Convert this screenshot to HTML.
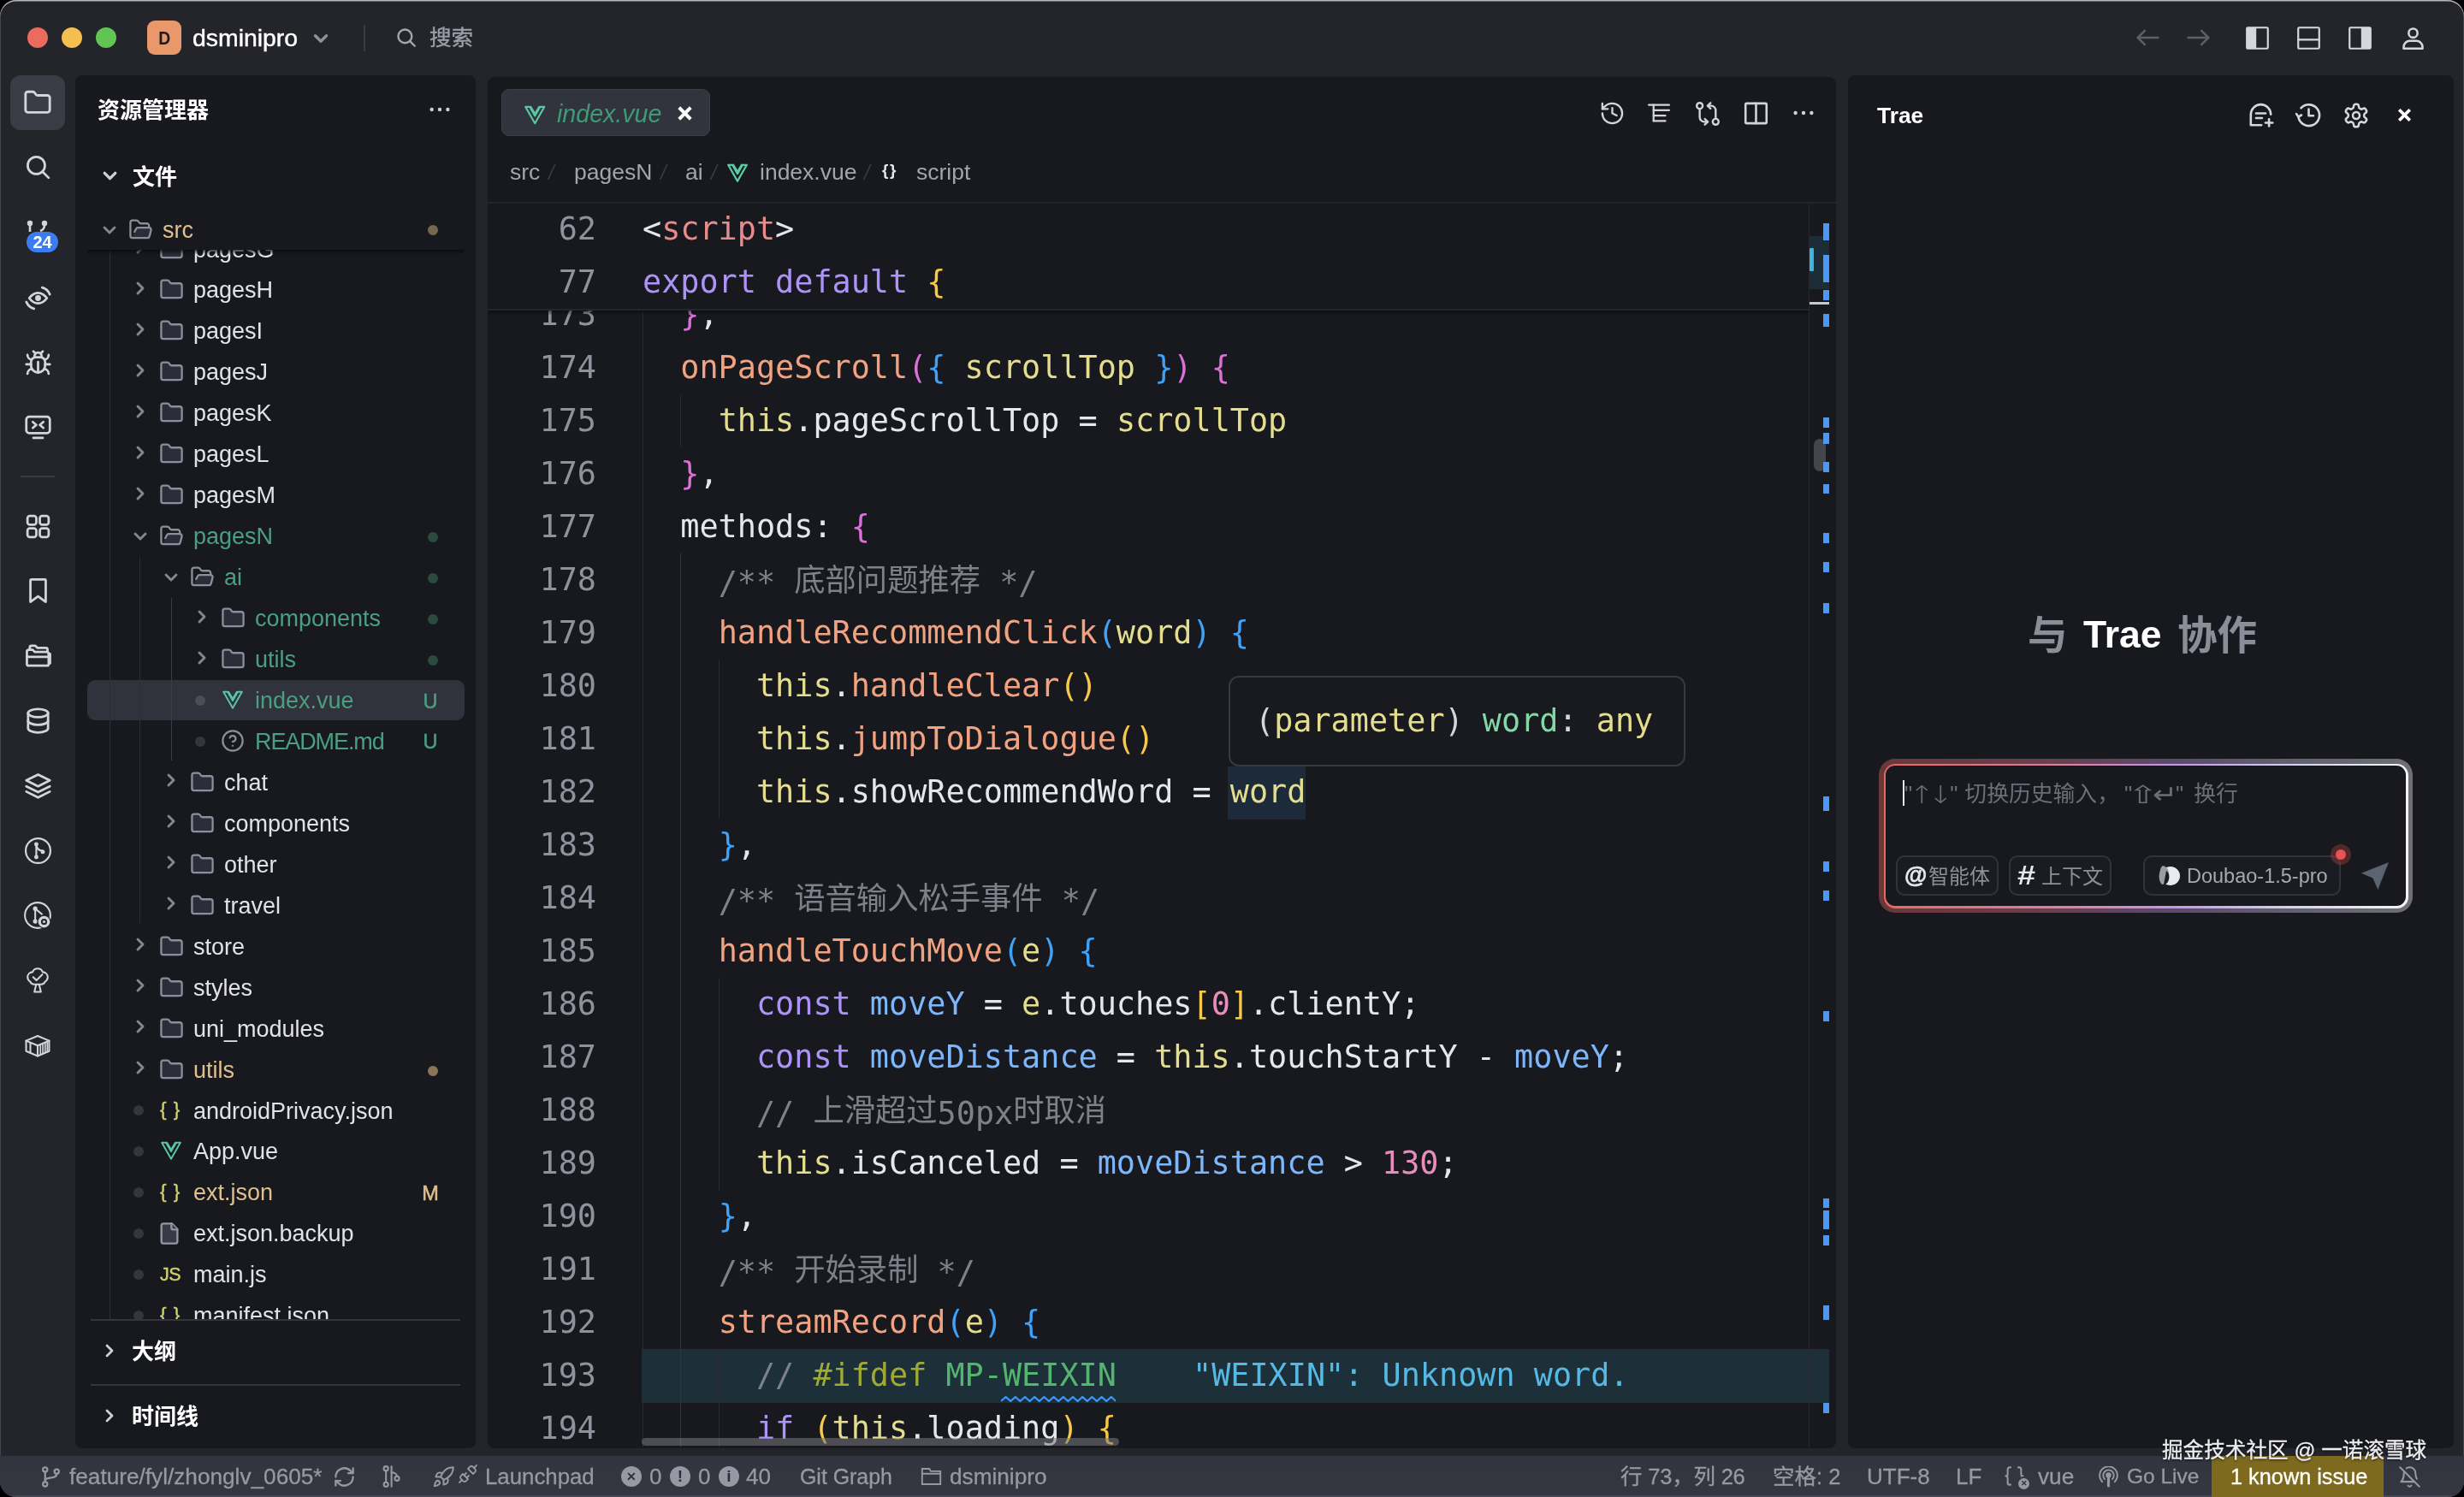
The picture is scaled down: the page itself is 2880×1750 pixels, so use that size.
<!DOCTYPE html>
<html lang="zh"><head><meta charset="utf-8"><title>index.vue — dsminipro</title>
<style>
html,body{margin:0;padding:0;background:#000;}
body{width:2880px;height:1750px;overflow:hidden;position:relative;font-family:"Liberation Sans","Noto Sans CJK SC",sans-serif;}
#win{position:absolute;left:0;top:0;width:2880px;height:1750px;background:#24252b;border-radius:19px;overflow:hidden;will-change:transform;box-shadow:inset 0 1.5px 0 0 #b4b6bd,inset 1px 0 0 0 #43454c,inset -1px 0 0 0 #43454c;}
.panel{position:absolute;background:#18191e;border-radius:8px;}

.ln{position:absolute;left:570px;width:127px;text-align:right;height:62px;line-height:62px;font-family:"DejaVu Sans Mono","Liberation Mono","Noto Sans CJK SC",monospace;font-size:36.81px;color:#8f919d;white-space:pre;}
.cl{position:absolute;left:751px;height:62px;line-height:62px;font-family:"DejaVu Sans Mono","Liberation Mono","Noto Sans CJK SC",monospace;font-size:36.81px;color:#e6e7ec;white-space:pre;}
.cj{font-size:36.3px;font-family:"Noto Sans CJK SC",sans-serif;position:relative;top:-2.5px;}

</style></head><body>
<div id="win">
<!-- panels -->
<div class="panel" style="left:88px;top:88px;width:468px;height:1605px"></div>
<div class="panel" style="left:570px;top:90px;width:1576px;height:1603px"></div>
<div class="panel" style="left:2160px;top:88px;width:708px;height:1605px"></div>
<div style="position:absolute;left:0;top:1702px;width:2880px;height:48px;background:linear-gradient(#32353e,#343740)"></div>
<div style="position:absolute;left:0;top:1748px;width:2880px;height:2px;background:#454852"></div>
<!-- titlebar -->
<div style="position:absolute;left:32px;top:32px;width:24px;height:24px;border-radius:50%;background:#ed6a5e"></div>
<div style="position:absolute;left:72px;top:32px;width:24px;height:24px;border-radius:50%;background:#f4bf4f"></div>
<div style="position:absolute;left:112px;top:32px;width:24px;height:24px;border-radius:50%;background:#61c554"></div>
<div style="position:absolute;left:172px;top:24px;width:40px;height:40px;border-radius:9px;background:#e9986c;color:#1c1c20;font-size:22.5px;font-weight:bold;line-height:41px;text-align:center"><span style="display:inline-block;transform:scaleX(.86)">D</span></div>
<div style="position:absolute;left:225px;top:24.5px;line-height:39px;height:39px;font-size:28.4px;color:#ffffff;font-weight:normal;white-space:nowrap;-webkit-text-stroke:0.45px #fff;">dsminipro</div>
<svg style="position:absolute;left:362.0px;top:31.5px;" width="26" height="26" viewBox="0 0 24 24" fill="none" stroke="#8f919b" stroke-width="3.1" stroke-linecap="round" stroke-linejoin="round"><path d="m6 9 6 6 6-6"/></svg>
<div style="position:absolute;left:425px;top:29px;width:2px;height:31px;background:#3b3d46"></div>
<svg style="position:absolute;left:462.0px;top:31.0px;" width="26" height="26" viewBox="0 0 24 24" fill="none" stroke="#a3a5af" stroke-width="2.2" stroke-linecap="round" stroke-linejoin="round"><circle cx="10.500" cy="10.500" r="7.300"/><path d="m21 21-5.200-5.200"/></svg>
<div style="position:absolute;left:502px;top:26.5px;line-height:35px;height:35px;font-size:25.5px;color:#9c9ea9;font-weight:normal;white-space:nowrap;-webkit-text-stroke:0.4px #9c9ea9;">搜索</div>
<svg style="position:absolute;left:2495.0px;top:29.0px;" width="30" height="30" viewBox="0 0 24 24" fill="none" stroke="#5d5f69" stroke-width="2" stroke-linecap="round" stroke-linejoin="round"><path d="m9.500 18.500-6.500-6.500 6.500-6.500"/><path d="M22 12H3"/></svg>
<svg style="position:absolute;left:2555.0px;top:29.0px;" width="30" height="30" viewBox="0 0 24 24" fill="none" stroke="#5d5f69" stroke-width="2" stroke-linecap="round" stroke-linejoin="round"><path d="M2 12h19"/><path d="m14.500 5.500 6.500 6.500-6.500 6.500"/></svg>
<svg style="position:absolute;left:2622.5px;top:28.5px;color:#d6d7dc;" width="31" height="31" viewBox="0 0 24 24" fill="none" stroke="#d6d7dc" stroke-width="1.7" stroke-linecap="round" stroke-linejoin="round"><rect x="2.500" y="2.500" width="19" height="19" rx="1"/><rect x="2.500" y="2.500" width="8.500" height="19" fill="currentColor" stroke="none"/></svg>
<svg style="position:absolute;left:2682.5px;top:28.5px;" width="31" height="31" viewBox="0 0 24 24" fill="none" stroke="#d6d7dc" stroke-width="1.7" stroke-linecap="round" stroke-linejoin="round"><rect x="2.500" y="2.500" width="19" height="19" rx="1"/><path d="M2.500 13.500h19"/></svg>
<svg style="position:absolute;left:2742.5px;top:28.5px;color:#d6d7dc;" width="31" height="31" viewBox="0 0 24 24" fill="none" stroke="#d6d7dc" stroke-width="1.7" stroke-linecap="round" stroke-linejoin="round"><rect x="2.500" y="2.500" width="19" height="19" rx="1"/><rect x="13" y="2.500" width="8.500" height="19" fill="currentColor" stroke="none"/></svg>
<svg style="position:absolute;left:2804.5px;top:28.5px;" width="31" height="31" viewBox="0 0 24 24" fill="none" stroke="#d6d7dc" stroke-width="2" stroke-linecap="round" stroke-linejoin="round"><circle cx="12" cy="7.500" r="4"/><path d="M3.500 21.500v-1.500a5.500 5.500 0 0 1 5.500-5.500h6a5.500 5.500 0 0 1 5.500 5.500v1.500Z"/></svg>
<!-- activity -->
<div style="position:absolute;left:12px;top:88px;width:64px;height:64px;border-radius:12px;background:#3a3c46"></div>
<svg style="position:absolute;left:27.0px;top:103.0px;color:#d4d5db;" width="34" height="34" viewBox="0 0 24 24" fill="none" stroke="#d4d5db" stroke-width="2" stroke-linecap="round" stroke-linejoin="round"><path d="M20 20a2 2 0 0 0 2-2V8a2 2 0 0 0-2-2h-7.9a2 2 0 0 1-1.69-.9L9.6 3.9A2 2 0 0 0 7.93 3H4a2 2 0 0 0-2 2v13a2 2 0 0 0 2 2Z"/></svg>
<svg style="position:absolute;left:27.5px;top:178.5px;color:#d4d5db;" width="33" height="33" viewBox="0 0 24 24" fill="none" stroke="#d4d5db" stroke-width="2" stroke-linecap="round" stroke-linejoin="round"><circle cx="10.500" cy="10.500" r="7.300"/><path d="m21 21-5.200-5.200"/></svg>
<svg style="position:absolute;left:27.5px;top:331.5px;color:#d4d5db;" width="33" height="33" viewBox="0 0 24 24" fill="none" stroke="#d4d5db" stroke-width="2" stroke-linecap="round" stroke-linejoin="round"><circle cx="12" cy="12" r="1.500" fill="currentColor"/><path d="M4.500 12c2.200-3 4.700-4.500 7.500-4.500s5.300 1.500 7.500 4.500c-2.200 3-4.700 4.500-7.500 4.500S6.700 15 4.500 12Z"/><path d="M15.500 3c3 .8 5.200 2.800 6.500 5.800"/><path d="M8.500 21c-3-.8-5.200-2.800-6.500-5.800"/></svg>
<svg style="position:absolute;left:27.5px;top:407.5px;color:#d4d5db;" width="33" height="33" viewBox="0 0 24 24" fill="none" stroke="#d4d5db" stroke-width="2" stroke-linecap="round" stroke-linejoin="round"><path d="m8 2 1.88 1.88"/><path d="M14.12 3.88 16 2"/><path d="M9 7.13v-1a3.003 3.003 0 1 1 6 0v1"/><path d="M12 20c-3.3 0-6-2.7-6-6v-3a4 4 0 0 1 4-4h4a4 4 0 0 1 4 4v3c0 3.3-2.7 6-6 6"/><path d="M12 20v-9"/><path d="M6.53 9C4.6 8.8 3 7.1 3 5"/><path d="M6 13H2"/><path d="M3 21c0-2.1 1.7-3.9 3.8-4"/><path d="M20.97 5c0 2.1-1.6 3.8-3.5 4"/><path d="M22 13h-4"/><path d="M17.2 17c2.1.1 3.8 1.9 3.8 4"/></svg>
<svg style="position:absolute;left:27.5px;top:482.5px;color:#d4d5db;" width="33" height="33" viewBox="0 0 24 24" fill="none" stroke="#d4d5db" stroke-width="2" stroke-linecap="round" stroke-linejoin="round"><rect x="2" y="3" width="20" height="14" rx="2.500"/><path d="M8 21h8"/><path d="m7.500 7.500 3 2.500-3 2.500"/><path d="m16.500 7.500-3 2.500 3 2.500"/></svg>
<svg style="position:absolute;left:27.5px;top:598.5px;color:#d4d5db;" width="33" height="33" viewBox="0 0 24 24" fill="none" stroke="#d4d5db" stroke-width="2" stroke-linecap="round" stroke-linejoin="round"><rect x="3" y="3" width="7.500" height="7.500" rx="2"/><rect x="13.500" y="3" width="7.500" height="7.500" rx="2"/><rect x="3" y="13.500" width="7.500" height="7.500" rx="2"/><rect x="13.500" y="13.500" width="7.500" height="7.500" rx="2"/></svg>
<svg style="position:absolute;left:27.5px;top:673.5px;color:#d4d5db;" width="33" height="33" viewBox="0 0 24 24" fill="none" stroke="#d4d5db" stroke-width="2" stroke-linecap="round" stroke-linejoin="round"><path d="M18.500 21.500 12 16.800 5.500 21.500V3.200a.7.7 0 0 1 .7-.7h11.600a.7.7 0 0 1 .7.7Z"/></svg>
<svg style="position:absolute;left:27.5px;top:749.5px;color:#d4d5db;" width="33" height="33" viewBox="0 0 24 24" fill="none" stroke="#d4d5db" stroke-width="2" stroke-linecap="round" stroke-linejoin="round"><path d="M5 6.500V4.800A1.300 1.300 0 0 1 6.300 3.500h3.400l1.600 1.800h7.400A1.300 1.300 0 0 1 20 6.600V8"/><path d="M2.500 19.500V8.300A1.300 1.300 0 0 1 3.800 7h3.700l1.600 1.800h10.600A1.300 1.300 0 0 1 21 10.100v9.100a1.300 1.300 0 0 1-1.300 1.300H3.800a1.300 1.300 0 0 1-1.300-1.300Z"/><path d="M2.500 13h18.500"/><path d="M21 10.500h1.200v8"/></svg>
<svg style="position:absolute;left:27.5px;top:825.5px;color:#d4d5db;" width="33" height="33" viewBox="0 0 24 24" fill="none" stroke="#d4d5db" stroke-width="2" stroke-linecap="round" stroke-linejoin="round"><ellipse cx="12" cy="5.500" rx="8.500" ry="3.500"/><path d="M3.500 5.500v13c0 1.900 3.800 3.500 8.500 3.500s8.500-1.600 8.500-3.500v-13"/><path d="M3.500 12c0 1.900 3.800 3.500 8.500 3.500s8.500-1.600 8.500-3.500"/></svg>
<svg style="position:absolute;left:27.5px;top:901.5px;color:#d4d5db;" width="33" height="33" viewBox="0 0 24 24" fill="none" stroke="#d4d5db" stroke-width="2" stroke-linecap="round" stroke-linejoin="round"><path d="m12 2.500 10 5-10 5-10-5Z"/><path d="m2 12.500 10 5 10-5"/><path d="m2 17 10 5 10-5"/></svg>
<svg style="position:absolute;left:27.5px;top:977.5px;color:#d4d5db;" width="33" height="33" viewBox="0 0 24 24" fill="none" stroke="#d4d5db" stroke-width="1.6" stroke-linecap="round" stroke-linejoin="round"><circle cx="12" cy="12" r="10.500"/><circle cx="10.500" cy="6.500" r="1" fill="currentColor"/><circle cx="10.500" cy="17.500" r="1" fill="currentColor"/><circle cx="16" cy="13" r="1" fill="currentColor"/><path d="M10.500 6.500v11"/><path d="M10.500 7.500c.5 2.500 2.500 4.500 5.500 4.500"/></svg>
<svg style="position:absolute;left:27.0px;top:1053.0px;color:#d4d5db;" width="34" height="34" viewBox="0 0 24 24" fill="none" stroke="#d4d5db" stroke-width="1.45" stroke-linecap="round" stroke-linejoin="round"><circle cx="12" cy="12" r="10.500"/><circle cx="10" cy="6.500" r="1.100" fill="currentColor"/><circle cx="10" cy="17" r="1.100" fill="currentColor"/><path d="M10 6.500v10.500"/><path d="M10 6.500 15.500 11"/><circle cx="17.300" cy="17.300" r="5.600" fill="#24252b" stroke="none"/><circle cx="17.300" cy="17.300" r="3.700" stroke-width="2.300"/><circle cx="17.300" cy="17.300" r="1.100" fill="currentColor" stroke="none"/></svg>
<svg style="position:absolute;left:27.0px;top:1129.0px;color:#d4d5db;" width="34" height="34" viewBox="0 0 24 24" fill="none" stroke="#d4d5db" stroke-width="1.45" stroke-linecap="round" stroke-linejoin="round"><path d="M12 2.300c2 0 3.600 1.200 4.200 2.900 2.300.100 4.100 1.900 4.100 4.200 0 1.600-.900 3-2.200 3.700-.500 1.300-1.800 2.200-3.300 2.200H9.200c-1.500 0-2.800-.900-3.300-2.200-1.300-.700-2.200-2.100-2.200-3.700 0-2.300 1.800-4.100 4.100-4.200.600-1.700 2.200-2.900 4.200-2.900Z"/><path d="M10.800 15.300 9.300 21.500h5.400l-1.500-6.200"/><path d="m8.300 9.300 2.700 2.700 4.800-4.800"/></svg>
<svg style="position:absolute;left:27.0px;top:1205.0px;color:#d4d5db;" width="34" height="34" viewBox="0 0 24 24" fill="none" stroke="#d4d5db" stroke-width="1.45" stroke-linecap="round" stroke-linejoin="round"><path d="M2.500 8.200 12 4.200l9.500 4v8.600L12 20.800l-9.500-4Z"/><path d="M2.500 8.200 12 12.200l9.500-4"/><path d="M12 12.200v8.600"/><path d="M6 10v8.300" /><path d="M14.300 11.600v8" stroke-width="1.200"/><path d="M16.300 10.800v8" stroke-width="1.200"/><path d="M18.200 10v8" stroke-width="1.200"/><path d="M20 9.300v8" stroke-width="1.200"/></svg>
<svg style="position:absolute;left:28px;top:255px;" width="44" height="44" viewBox="0 0 44 44" fill="none"><circle cx="7" cy="6" r="3.200" fill="#d4d5db"/><circle cx="24" cy="6" r="3.200" fill="#d4d5db"/><path d="M7 8v8" stroke="#d4d5db" stroke-width="2.600"/><path d="M24 8c0 4-2 6-5 7" stroke="#d4d5db" stroke-width="2.600"/></svg>
<div style="position:absolute;left:31px;top:271px;width:37px;height:24px;border-radius:12px;background:#3b7df0;color:#fff;font-size:20px;font-weight:bold;line-height:24px;text-align:center;letter-spacing:0px">24</div>
<div style="position:absolute;left:24px;top:556px;width:40px;height:2px;background:#3a3c45"></div>
<!-- sidebar -->
<div style="position:absolute;left:114px;top:111.0px;line-height:36px;height:36px;font-size:26px;color:#ffffff;font-weight:bold;white-space:nowrap;">资源管理器</div>
<svg style="position:absolute;left:499.0px;top:113.0px;color:#d0d1d7;" width="30" height="30" viewBox="0 0 24 24" fill="none" stroke="#d0d1d7" stroke-width="2" stroke-linecap="round" stroke-linejoin="round"><circle cx="4.500" cy="12" r="1.750" fill="currentColor" stroke="none"/><circle cx="12" cy="12" r="1.750" fill="currentColor" stroke="none"/><circle cx="19.500" cy="12" r="1.750" fill="currentColor" stroke="none"/></svg>
<div style="position:absolute;left:88px;top:292px;width:468px;height:1250px;overflow:hidden"><div style="position:absolute;left:-88px;top:-292px">
<div style="position:absolute;left:102px;top:795px;width:441px;height:47px;border-radius:9px;background:#30323c"></div>
<div style="position:absolute;left:128px;top:292px;width:1px;height:1250px;background:#2c2e36"></div>
<div style="position:absolute;left:163px;top:651px;width:1px;height:428px;background:#2c2e36"></div>
<div style="position:absolute;left:200px;top:699px;width:1px;height:190px;background:#3a3c45"></div>
<svg style="position:absolute;left:152.0px;top:277.0px;" width="24" height="24" viewBox="0 0 24 24" fill="none" stroke="#85878f" stroke-width="2.9" stroke-linecap="round" stroke-linejoin="round"><path d="m9 6 6 6-6 6"/></svg>
<svg style="position:absolute;left:185.5px;top:276.5px;fill:#2b2e38;" width="29" height="29" viewBox="0 0 24 24" fill="none" stroke="#8c8e9b" stroke-width="1.9" stroke-linecap="round" stroke-linejoin="round"><path d="M20 20a2 2 0 0 0 2-2V8a2 2 0 0 0-2-2h-7.9a2 2 0 0 1-1.69-.9L9.6 3.9A2 2 0 0 0 7.93 3H4a2 2 0 0 0-2 2v13a2 2 0 0 0 2 2Z"/></svg>
<div style="position:absolute;left:226px;top:273.5px;line-height:37px;height:37px;font-size:27px;color:#e2e3e8;font-weight:normal;white-space:nowrap;">pagesG</div>
<svg style="position:absolute;left:152.0px;top:324.9px;" width="24" height="24" viewBox="0 0 24 24" fill="none" stroke="#85878f" stroke-width="2.9" stroke-linecap="round" stroke-linejoin="round"><path d="m9 6 6 6-6 6"/></svg>
<svg style="position:absolute;left:185.5px;top:324.4px;fill:#2b2e38;" width="29" height="29" viewBox="0 0 24 24" fill="none" stroke="#8c8e9b" stroke-width="1.9" stroke-linecap="round" stroke-linejoin="round"><path d="M20 20a2 2 0 0 0 2-2V8a2 2 0 0 0-2-2h-7.9a2 2 0 0 1-1.69-.9L9.6 3.9A2 2 0 0 0 7.93 3H4a2 2 0 0 0-2 2v13a2 2 0 0 0 2 2Z"/></svg>
<div style="position:absolute;left:226px;top:321.4px;line-height:37px;height:37px;font-size:27px;color:#e2e3e8;font-weight:normal;white-space:nowrap;">pagesH</div>
<svg style="position:absolute;left:152.0px;top:372.9px;" width="24" height="24" viewBox="0 0 24 24" fill="none" stroke="#85878f" stroke-width="2.9" stroke-linecap="round" stroke-linejoin="round"><path d="m9 6 6 6-6 6"/></svg>
<svg style="position:absolute;left:185.5px;top:372.4px;fill:#2b2e38;" width="29" height="29" viewBox="0 0 24 24" fill="none" stroke="#8c8e9b" stroke-width="1.9" stroke-linecap="round" stroke-linejoin="round"><path d="M20 20a2 2 0 0 0 2-2V8a2 2 0 0 0-2-2h-7.9a2 2 0 0 1-1.69-.9L9.6 3.9A2 2 0 0 0 7.93 3H4a2 2 0 0 0-2 2v13a2 2 0 0 0 2 2Z"/></svg>
<div style="position:absolute;left:226px;top:369.4px;line-height:37px;height:37px;font-size:27px;color:#e2e3e8;font-weight:normal;white-space:nowrap;">pagesI</div>
<svg style="position:absolute;left:152.0px;top:420.8px;" width="24" height="24" viewBox="0 0 24 24" fill="none" stroke="#85878f" stroke-width="2.9" stroke-linecap="round" stroke-linejoin="round"><path d="m9 6 6 6-6 6"/></svg>
<svg style="position:absolute;left:185.5px;top:420.3px;fill:#2b2e38;" width="29" height="29" viewBox="0 0 24 24" fill="none" stroke="#8c8e9b" stroke-width="1.9" stroke-linecap="round" stroke-linejoin="round"><path d="M20 20a2 2 0 0 0 2-2V8a2 2 0 0 0-2-2h-7.9a2 2 0 0 1-1.69-.9L9.6 3.9A2 2 0 0 0 7.93 3H4a2 2 0 0 0-2 2v13a2 2 0 0 0 2 2Z"/></svg>
<div style="position:absolute;left:226px;top:417.3px;line-height:37px;height:37px;font-size:27px;color:#e2e3e8;font-weight:normal;white-space:nowrap;">pagesJ</div>
<svg style="position:absolute;left:152.0px;top:468.8px;" width="24" height="24" viewBox="0 0 24 24" fill="none" stroke="#85878f" stroke-width="2.9" stroke-linecap="round" stroke-linejoin="round"><path d="m9 6 6 6-6 6"/></svg>
<svg style="position:absolute;left:185.5px;top:468.3px;fill:#2b2e38;" width="29" height="29" viewBox="0 0 24 24" fill="none" stroke="#8c8e9b" stroke-width="1.9" stroke-linecap="round" stroke-linejoin="round"><path d="M20 20a2 2 0 0 0 2-2V8a2 2 0 0 0-2-2h-7.9a2 2 0 0 1-1.69-.9L9.6 3.9A2 2 0 0 0 7.93 3H4a2 2 0 0 0-2 2v13a2 2 0 0 0 2 2Z"/></svg>
<div style="position:absolute;left:226px;top:465.3px;line-height:37px;height:37px;font-size:27px;color:#e2e3e8;font-weight:normal;white-space:nowrap;">pagesK</div>
<svg style="position:absolute;left:152.0px;top:516.8px;" width="24" height="24" viewBox="0 0 24 24" fill="none" stroke="#85878f" stroke-width="2.9" stroke-linecap="round" stroke-linejoin="round"><path d="m9 6 6 6-6 6"/></svg>
<svg style="position:absolute;left:185.5px;top:516.2px;fill:#2b2e38;" width="29" height="29" viewBox="0 0 24 24" fill="none" stroke="#8c8e9b" stroke-width="1.9" stroke-linecap="round" stroke-linejoin="round"><path d="M20 20a2 2 0 0 0 2-2V8a2 2 0 0 0-2-2h-7.9a2 2 0 0 1-1.69-.9L9.6 3.9A2 2 0 0 0 7.93 3H4a2 2 0 0 0-2 2v13a2 2 0 0 0 2 2Z"/></svg>
<div style="position:absolute;left:226px;top:513.2px;line-height:37px;height:37px;font-size:27px;color:#e2e3e8;font-weight:normal;white-space:nowrap;">pagesL</div>
<svg style="position:absolute;left:152.0px;top:564.7px;" width="24" height="24" viewBox="0 0 24 24" fill="none" stroke="#85878f" stroke-width="2.9" stroke-linecap="round" stroke-linejoin="round"><path d="m9 6 6 6-6 6"/></svg>
<svg style="position:absolute;left:185.5px;top:564.2px;fill:#2b2e38;" width="29" height="29" viewBox="0 0 24 24" fill="none" stroke="#8c8e9b" stroke-width="1.9" stroke-linecap="round" stroke-linejoin="round"><path d="M20 20a2 2 0 0 0 2-2V8a2 2 0 0 0-2-2h-7.9a2 2 0 0 1-1.69-.9L9.6 3.9A2 2 0 0 0 7.93 3H4a2 2 0 0 0-2 2v13a2 2 0 0 0 2 2Z"/></svg>
<div style="position:absolute;left:226px;top:561.2px;line-height:37px;height:37px;font-size:27px;color:#e2e3e8;font-weight:normal;white-space:nowrap;">pagesM</div>
<svg style="position:absolute;left:152.0px;top:615.2px;" width="24" height="24" viewBox="0 0 24 24" fill="none" stroke="#85878f" stroke-width="2.9" stroke-linecap="round" stroke-linejoin="round"><path d="m6 9 6 6 6-6"/></svg>
<svg style="position:absolute;left:185.5px;top:612.2px;" width="29" height="29" viewBox="0 0 24 24" fill="none" stroke="#8c8e9b" stroke-width="1.9" stroke-linecap="round" stroke-linejoin="round"><path d="M3.200 19.600 6 14l1.500-2.900A2 2 0 0 1 9.240 10H20a2 2 0 0 1 1.940 2.500l-1.540 6a2 2 0 0 1-1.950 1.500H4Z" fill="#2b2e38" stroke="none"/><path d="m6 14 1.5-2.9A2 2 0 0 1 9.24 10H20a2 2 0 0 1 1.94 2.5l-1.54 6a2 2 0 0 1-1.95 1.5H4a2 2 0 0 1-2-2V5a2 2 0 0 1 2-2h3.9a2 2 0 0 1 1.69.9l.81 1.2a2 2 0 0 0 1.67.9H18a2 2 0 0 1 2 2v2"/></svg>
<div style="position:absolute;left:226px;top:609.2px;line-height:37px;height:37px;font-size:27px;color:#4a9f80;font-weight:normal;white-space:nowrap;">pagesN</div>
<div style="position:absolute;left:500px;top:622.1500000000001px;width:12px;height:12px;border-radius:50%;background:#2c4a40"></div>
<svg style="position:absolute;left:188.0px;top:663.1px;" width="24" height="24" viewBox="0 0 24 24" fill="none" stroke="#85878f" stroke-width="2.9" stroke-linecap="round" stroke-linejoin="round"><path d="m6 9 6 6 6-6"/></svg>
<svg style="position:absolute;left:221.5px;top:660.1px;" width="29" height="29" viewBox="0 0 24 24" fill="none" stroke="#8c8e9b" stroke-width="1.9" stroke-linecap="round" stroke-linejoin="round"><path d="M3.200 19.600 6 14l1.500-2.900A2 2 0 0 1 9.240 10H20a2 2 0 0 1 1.940 2.500l-1.540 6a2 2 0 0 1-1.950 1.500H4Z" fill="#2b2e38" stroke="none"/><path d="m6 14 1.5-2.9A2 2 0 0 1 9.24 10H20a2 2 0 0 1 1.94 2.5l-1.54 6a2 2 0 0 1-1.95 1.5H4a2 2 0 0 1-2-2V5a2 2 0 0 1 2-2h3.9a2 2 0 0 1 1.69.9l.81 1.2a2 2 0 0 0 1.67.9H18a2 2 0 0 1 2 2v2"/></svg>
<div style="position:absolute;left:262px;top:657.1px;line-height:37px;height:37px;font-size:27px;color:#4a9f80;font-weight:normal;white-space:nowrap;">ai</div>
<div style="position:absolute;left:500px;top:670.1000000000001px;width:12px;height:12px;border-radius:50%;background:#2c4a40"></div>
<svg style="position:absolute;left:224.0px;top:708.6px;" width="24" height="24" viewBox="0 0 24 24" fill="none" stroke="#85878f" stroke-width="2.9" stroke-linecap="round" stroke-linejoin="round"><path d="m9 6 6 6-6 6"/></svg>
<svg style="position:absolute;left:257.5px;top:708.1px;fill:#2b2e38;" width="29" height="29" viewBox="0 0 24 24" fill="none" stroke="#8c8e9b" stroke-width="1.9" stroke-linecap="round" stroke-linejoin="round"><path d="M20 20a2 2 0 0 0 2-2V8a2 2 0 0 0-2-2h-7.9a2 2 0 0 1-1.69-.9L9.6 3.9A2 2 0 0 0 7.93 3H4a2 2 0 0 0-2 2v13a2 2 0 0 0 2 2Z"/></svg>
<div style="position:absolute;left:298px;top:705.1px;line-height:37px;height:37px;font-size:27px;color:#4a9f80;font-weight:normal;white-space:nowrap;">components</div>
<div style="position:absolute;left:500px;top:718.0500000000002px;width:12px;height:12px;border-radius:50%;background:#2c4a40"></div>
<svg style="position:absolute;left:224.0px;top:756.5px;" width="24" height="24" viewBox="0 0 24 24" fill="none" stroke="#85878f" stroke-width="2.9" stroke-linecap="round" stroke-linejoin="round"><path d="m9 6 6 6-6 6"/></svg>
<svg style="position:absolute;left:257.5px;top:756.0px;fill:#2b2e38;" width="29" height="29" viewBox="0 0 24 24" fill="none" stroke="#8c8e9b" stroke-width="1.9" stroke-linecap="round" stroke-linejoin="round"><path d="M20 20a2 2 0 0 0 2-2V8a2 2 0 0 0-2-2h-7.9a2 2 0 0 1-1.69-.9L9.6 3.9A2 2 0 0 0 7.93 3H4a2 2 0 0 0-2 2v13a2 2 0 0 0 2 2Z"/></svg>
<div style="position:absolute;left:298px;top:753.0px;line-height:37px;height:37px;font-size:27px;color:#4a9f80;font-weight:normal;white-space:nowrap;">utils</div>
<div style="position:absolute;left:500px;top:766.0000000000002px;width:12px;height:12px;border-radius:50%;background:#2c4a40"></div>
<div style="position:absolute;left:228px;top:812.9500000000003px;width:12px;height:12px;border-radius:50%;background:#4b4d58"></div>
<svg style="position:absolute;left:258.5px;top:805.0px;" width="26" height="26" viewBox="0 0 24 24" fill="none" stroke="#5cc5a2" stroke-width="1.8" stroke-linecap="round" stroke-linejoin="round"><path d="M2 3.500h4.500L12 13l5.500-9.500H22L12 21Z" /><path d="M7.500 3.500 12 11l4.500-7.500"/></svg>
<div style="position:absolute;left:298px;top:801.0px;line-height:37px;height:37px;font-size:27px;color:#4a9f80;font-weight:normal;white-space:nowrap;">index.vue</div>
<div style="position:absolute;left:493px;top:803.5px;line-height:32px;height:32px;font-size:23.5px;color:#4a9f80;font-weight:normal;white-space:nowrap;width:20px;text-align:center;-webkit-text-stroke:0.5px #4a9f80;">U</div>
<div style="position:absolute;left:228px;top:860.9000000000003px;width:12px;height:12px;border-radius:50%;background:#34363f"></div>
<svg style="position:absolute;left:258.0px;top:852.4px;" width="28" height="28" viewBox="0 0 24 24" fill="none" stroke="#8c8e9b" stroke-width="1.9" stroke-linecap="round" stroke-linejoin="round"><circle cx="12" cy="12" r="10"/><path d="M9.090 9a3 3 0 0 1 5.830 1c0 2-3 3-3 3"/><path d="M12 17h.010"/></svg>
<div style="position:absolute;left:298px;top:848.9px;line-height:37px;height:37px;font-size:27px;color:#4a9f80;font-weight:normal;white-space:nowrap;letter-spacing:-1.1px;">README.md</div>
<div style="position:absolute;left:493px;top:851.4px;line-height:32px;height:32px;font-size:23.5px;color:#4a9f80;font-weight:normal;white-space:nowrap;width:20px;text-align:center;-webkit-text-stroke:0.5px #4a9f80;">U</div>
<svg style="position:absolute;left:188.0px;top:900.4px;" width="24" height="24" viewBox="0 0 24 24" fill="none" stroke="#85878f" stroke-width="2.9" stroke-linecap="round" stroke-linejoin="round"><path d="m9 6 6 6-6 6"/></svg>
<svg style="position:absolute;left:221.5px;top:899.9px;fill:#2b2e38;" width="29" height="29" viewBox="0 0 24 24" fill="none" stroke="#8c8e9b" stroke-width="1.9" stroke-linecap="round" stroke-linejoin="round"><path d="M20 20a2 2 0 0 0 2-2V8a2 2 0 0 0-2-2h-7.9a2 2 0 0 1-1.69-.9L9.6 3.9A2 2 0 0 0 7.93 3H4a2 2 0 0 0-2 2v13a2 2 0 0 0 2 2Z"/></svg>
<div style="position:absolute;left:262px;top:896.9px;line-height:37px;height:37px;font-size:27px;color:#e2e3e8;font-weight:normal;white-space:nowrap;">chat</div>
<svg style="position:absolute;left:188.0px;top:948.3px;" width="24" height="24" viewBox="0 0 24 24" fill="none" stroke="#85878f" stroke-width="2.9" stroke-linecap="round" stroke-linejoin="round"><path d="m9 6 6 6-6 6"/></svg>
<svg style="position:absolute;left:221.5px;top:947.8px;fill:#2b2e38;" width="29" height="29" viewBox="0 0 24 24" fill="none" stroke="#8c8e9b" stroke-width="1.9" stroke-linecap="round" stroke-linejoin="round"><path d="M20 20a2 2 0 0 0 2-2V8a2 2 0 0 0-2-2h-7.9a2 2 0 0 1-1.69-.9L9.6 3.9A2 2 0 0 0 7.93 3H4a2 2 0 0 0-2 2v13a2 2 0 0 0 2 2Z"/></svg>
<div style="position:absolute;left:262px;top:944.8px;line-height:37px;height:37px;font-size:27px;color:#e2e3e8;font-weight:normal;white-space:nowrap;">components</div>
<svg style="position:absolute;left:188.0px;top:996.3px;" width="24" height="24" viewBox="0 0 24 24" fill="none" stroke="#85878f" stroke-width="2.9" stroke-linecap="round" stroke-linejoin="round"><path d="m9 6 6 6-6 6"/></svg>
<svg style="position:absolute;left:221.5px;top:995.8px;fill:#2b2e38;" width="29" height="29" viewBox="0 0 24 24" fill="none" stroke="#8c8e9b" stroke-width="1.9" stroke-linecap="round" stroke-linejoin="round"><path d="M20 20a2 2 0 0 0 2-2V8a2 2 0 0 0-2-2h-7.9a2 2 0 0 1-1.69-.9L9.6 3.9A2 2 0 0 0 7.93 3H4a2 2 0 0 0-2 2v13a2 2 0 0 0 2 2Z"/></svg>
<div style="position:absolute;left:262px;top:992.8px;line-height:37px;height:37px;font-size:27px;color:#e2e3e8;font-weight:normal;white-space:nowrap;">other</div>
<svg style="position:absolute;left:188.0px;top:1044.2px;" width="24" height="24" viewBox="0 0 24 24" fill="none" stroke="#85878f" stroke-width="2.9" stroke-linecap="round" stroke-linejoin="round"><path d="m9 6 6 6-6 6"/></svg>
<svg style="position:absolute;left:221.5px;top:1043.7px;fill:#2b2e38;" width="29" height="29" viewBox="0 0 24 24" fill="none" stroke="#8c8e9b" stroke-width="1.9" stroke-linecap="round" stroke-linejoin="round"><path d="M20 20a2 2 0 0 0 2-2V8a2 2 0 0 0-2-2h-7.9a2 2 0 0 1-1.69-.9L9.6 3.9A2 2 0 0 0 7.93 3H4a2 2 0 0 0-2 2v13a2 2 0 0 0 2 2Z"/></svg>
<div style="position:absolute;left:262px;top:1040.7px;line-height:37px;height:37px;font-size:27px;color:#e2e3e8;font-weight:normal;white-space:nowrap;">travel</div>
<svg style="position:absolute;left:152.0px;top:1092.2px;" width="24" height="24" viewBox="0 0 24 24" fill="none" stroke="#85878f" stroke-width="2.9" stroke-linecap="round" stroke-linejoin="round"><path d="m9 6 6 6-6 6"/></svg>
<svg style="position:absolute;left:185.5px;top:1091.7px;fill:#2b2e38;" width="29" height="29" viewBox="0 0 24 24" fill="none" stroke="#8c8e9b" stroke-width="1.9" stroke-linecap="round" stroke-linejoin="round"><path d="M20 20a2 2 0 0 0 2-2V8a2 2 0 0 0-2-2h-7.9a2 2 0 0 1-1.69-.9L9.6 3.9A2 2 0 0 0 7.93 3H4a2 2 0 0 0-2 2v13a2 2 0 0 0 2 2Z"/></svg>
<div style="position:absolute;left:226px;top:1088.7px;line-height:37px;height:37px;font-size:27px;color:#e2e3e8;font-weight:normal;white-space:nowrap;">store</div>
<svg style="position:absolute;left:152.0px;top:1140.1px;" width="24" height="24" viewBox="0 0 24 24" fill="none" stroke="#85878f" stroke-width="2.9" stroke-linecap="round" stroke-linejoin="round"><path d="m9 6 6 6-6 6"/></svg>
<svg style="position:absolute;left:185.5px;top:1139.6px;fill:#2b2e38;" width="29" height="29" viewBox="0 0 24 24" fill="none" stroke="#8c8e9b" stroke-width="1.9" stroke-linecap="round" stroke-linejoin="round"><path d="M20 20a2 2 0 0 0 2-2V8a2 2 0 0 0-2-2h-7.9a2 2 0 0 1-1.69-.9L9.6 3.9A2 2 0 0 0 7.93 3H4a2 2 0 0 0-2 2v13a2 2 0 0 0 2 2Z"/></svg>
<div style="position:absolute;left:226px;top:1136.6px;line-height:37px;height:37px;font-size:27px;color:#e2e3e8;font-weight:normal;white-space:nowrap;">styles</div>
<svg style="position:absolute;left:152.0px;top:1188.1px;" width="24" height="24" viewBox="0 0 24 24" fill="none" stroke="#85878f" stroke-width="2.9" stroke-linecap="round" stroke-linejoin="round"><path d="m9 6 6 6-6 6"/></svg>
<svg style="position:absolute;left:185.5px;top:1187.6px;fill:#2b2e38;" width="29" height="29" viewBox="0 0 24 24" fill="none" stroke="#8c8e9b" stroke-width="1.9" stroke-linecap="round" stroke-linejoin="round"><path d="M20 20a2 2 0 0 0 2-2V8a2 2 0 0 0-2-2h-7.9a2 2 0 0 1-1.69-.9L9.6 3.9A2 2 0 0 0 7.93 3H4a2 2 0 0 0-2 2v13a2 2 0 0 0 2 2Z"/></svg>
<div style="position:absolute;left:226px;top:1184.6px;line-height:37px;height:37px;font-size:27px;color:#e2e3e8;font-weight:normal;white-space:nowrap;">uni_modules</div>
<svg style="position:absolute;left:152.0px;top:1236.0px;" width="24" height="24" viewBox="0 0 24 24" fill="none" stroke="#85878f" stroke-width="2.9" stroke-linecap="round" stroke-linejoin="round"><path d="m9 6 6 6-6 6"/></svg>
<svg style="position:absolute;left:185.5px;top:1235.5px;fill:#2b2e38;" width="29" height="29" viewBox="0 0 24 24" fill="none" stroke="#8c8e9b" stroke-width="1.9" stroke-linecap="round" stroke-linejoin="round"><path d="M20 20a2 2 0 0 0 2-2V8a2 2 0 0 0-2-2h-7.9a2 2 0 0 1-1.69-.9L9.6 3.9A2 2 0 0 0 7.93 3H4a2 2 0 0 0-2 2v13a2 2 0 0 0 2 2Z"/></svg>
<div style="position:absolute;left:226px;top:1232.5px;line-height:37px;height:37px;font-size:27px;color:#dfc08e;font-weight:normal;white-space:nowrap;">utils</div>
<div style="position:absolute;left:500px;top:1245.5000000000007px;width:12px;height:12px;border-radius:50%;background:#8a755a"></div>
<div style="position:absolute;left:156px;top:1292.4500000000007px;width:12px;height:12px;border-radius:50%;background:#34363f"></div>
<div style="position:absolute;left:187px;top:1281.0px;line-height:31px;height:31px;font-size:22.5px;color:#d1d06d;font-weight:normal;white-space:nowrap;letter-spacing:1.5px;-webkit-text-stroke:0.4px #d1d06d;">{&hairsp;&hairsp;}</div>
<div style="position:absolute;left:226px;top:1280.5px;line-height:37px;height:37px;font-size:27px;color:#e2e3e8;font-weight:normal;white-space:nowrap;">androidPrivacy.json</div>
<div style="position:absolute;left:156px;top:1340.4000000000008px;width:12px;height:12px;border-radius:50%;background:#34363f"></div>
<svg style="position:absolute;left:186.5px;top:1332.4px;" width="26" height="26" viewBox="0 0 24 24" fill="none" stroke="#5cc5a2" stroke-width="1.8" stroke-linecap="round" stroke-linejoin="round"><path d="M2 3.500h4.500L12 13l5.500-9.500H22L12 21Z" /><path d="M7.500 3.500 12 11l4.500-7.500"/></svg>
<div style="position:absolute;left:226px;top:1328.4px;line-height:37px;height:37px;font-size:27px;color:#e2e3e8;font-weight:normal;white-space:nowrap;">App.vue</div>
<div style="position:absolute;left:156px;top:1388.3500000000008px;width:12px;height:12px;border-radius:50%;background:#34363f"></div>
<div style="position:absolute;left:187px;top:1376.9px;line-height:31px;height:31px;font-size:22.5px;color:#d1d06d;font-weight:normal;white-space:nowrap;letter-spacing:1.5px;-webkit-text-stroke:0.4px #d1d06d;">{&hairsp;&hairsp;}</div>
<div style="position:absolute;left:226px;top:1376.4px;line-height:37px;height:37px;font-size:27px;color:#dfc08e;font-weight:normal;white-space:nowrap;">ext.json</div>
<div style="position:absolute;left:493px;top:1378.9px;line-height:32px;height:32px;font-size:23.5px;color:#dfc08e;font-weight:normal;white-space:nowrap;width:20px;text-align:center;-webkit-text-stroke:0.5px #dfc08e;">M</div>
<div style="position:absolute;left:156px;top:1436.3000000000009px;width:12px;height:12px;border-radius:50%;background:#34363f"></div>
<svg style="position:absolute;left:183.6px;top:1428.3px;fill:#383b46;" width="28" height="28" viewBox="0 0 24 24" fill="none" stroke="#9496a2" stroke-width="2" stroke-linecap="round" stroke-linejoin="round"><path d="M14.500 2H6a2 2 0 0 0-2 2v16a2 2 0 0 0 2 2h12a2 2 0 0 0 2-2V7.500Z"/><path d="M14 2v4.500a1.500 1.500 0 0 0 1.500 1.500H20"/></svg>
<div style="position:absolute;left:226px;top:1424.3px;line-height:37px;height:37px;font-size:27px;color:#e2e3e8;font-weight:normal;white-space:nowrap;">ext.json.backup</div>
<div style="position:absolute;left:156px;top:1484.250000000001px;width:12px;height:12px;border-radius:50%;background:#34363f"></div>
<div style="position:absolute;left:187px;top:1475.3px;line-height:30px;height:30px;font-size:21.5px;color:#d1d06d;font-weight:normal;white-space:nowrap;-webkit-text-stroke:0.4px #d1d06d;letter-spacing:-0.5px;">JS</div>
<div style="position:absolute;left:226px;top:1472.3px;line-height:37px;height:37px;font-size:27px;color:#e2e3e8;font-weight:normal;white-space:nowrap;">main.js</div>
<div style="position:absolute;left:156px;top:1532.200000000001px;width:12px;height:12px;border-radius:50%;background:#34363f"></div>
<div style="position:absolute;left:187px;top:1520.7px;line-height:31px;height:31px;font-size:22.5px;color:#d1d06d;font-weight:normal;white-space:nowrap;letter-spacing:1.5px;-webkit-text-stroke:0.4px #d1d06d;">{&hairsp;&hairsp;}</div>
<div style="position:absolute;left:226px;top:1520.2px;line-height:37px;height:37px;font-size:27px;color:#e2e3e8;font-weight:normal;white-space:nowrap;">manifest.json</div>
</div></div>
<div style="position:absolute;left:102px;top:292px;width:440px;height:6px;background:linear-gradient(rgba(8,9,12,.75),rgba(8,9,12,0))"></div>
<svg style="position:absolute;left:115.5px;top:193.0px;" width="25" height="25" viewBox="0 0 24 24" fill="none" stroke="#d0d1d7" stroke-width="3.2" stroke-linecap="round" stroke-linejoin="round"><path d="m6 9 6 6 6-6"/></svg>
<div style="position:absolute;left:155px;top:189.0px;line-height:36px;height:36px;font-size:26px;color:#ffffff;font-weight:bold;white-space:nowrap;">文件</div>
<svg style="position:absolute;left:116.0px;top:257.0px;" width="24" height="24" viewBox="0 0 24 24" fill="none" stroke="#85878f" stroke-width="2.9" stroke-linecap="round" stroke-linejoin="round"><path d="m6 9 6 6 6-6"/></svg>
<svg style="position:absolute;left:150.0px;top:253.5px;" width="29" height="29" viewBox="0 0 24 24" fill="none" stroke="#8c8e9b" stroke-width="1.9" stroke-linecap="round" stroke-linejoin="round"><path d="M3.200 19.600 6 14l1.500-2.900A2 2 0 0 1 9.240 10H20a2 2 0 0 1 1.940 2.500l-1.540 6a2 2 0 0 1-1.950 1.500H4Z" fill="#2b2e38" stroke="none"/><path d="m6 14 1.5-2.9A2 2 0 0 1 9.24 10H20a2 2 0 0 1 1.94 2.5l-1.54 6a2 2 0 0 1-1.95 1.5H4a2 2 0 0 1-2-2V5a2 2 0 0 1 2-2h3.9a2 2 0 0 1 1.69.9l.81 1.2a2 2 0 0 0 1.67.9H18a2 2 0 0 1 2 2v2"/></svg>
<div style="position:absolute;left:190px;top:250.5px;line-height:37px;height:37px;font-size:27px;color:#dfc08e;font-weight:normal;white-space:nowrap;">src</div>
<div style="position:absolute;left:500px;top:263px;width:12px;height:12px;border-radius:50%;background:#75664f"></div>
<div style="position:absolute;left:106px;top:1542px;width:432px;height:2px;background:#34363e"></div>
<svg style="position:absolute;left:116.0px;top:1567.0px;" width="24" height="24" viewBox="0 0 24 24" fill="none" stroke="#d0d1d7" stroke-width="2.8" stroke-linecap="round" stroke-linejoin="round"><path d="m9 6 6 6-6 6"/></svg>
<div style="position:absolute;left:154px;top:1562.0px;line-height:36px;height:36px;font-size:26px;color:#ffffff;font-weight:bold;white-space:nowrap;">大纲</div>
<div style="position:absolute;left:106px;top:1618px;width:432px;height:2px;background:#34363e"></div>
<svg style="position:absolute;left:116.0px;top:1643.0px;" width="24" height="24" viewBox="0 0 24 24" fill="none" stroke="#d0d1d7" stroke-width="2.8" stroke-linecap="round" stroke-linejoin="round"><path d="m9 6 6 6-6 6"/></svg>
<div style="position:absolute;left:154px;top:1638.0px;line-height:36px;height:36px;font-size:26px;color:#ffffff;font-weight:bold;white-space:nowrap;">时间线</div>
<!-- editor -->
<div style="position:absolute;left:586px;top:104px;width:244px;height:55px;border-radius:9px;background:#31333d;box-shadow:inset 0 0 0 1px #3b3d47"></div>
<svg style="position:absolute;left:612.2px;top:121.2px;" width="26.5" height="26.5" viewBox="0 0 24 24" fill="none" stroke="#5cc5a2" stroke-width="1.9" stroke-linecap="round" stroke-linejoin="round"><path d="M2 3.500h4.500L12 13l5.500-9.500H22L12 21Z" /><path d="M7.500 3.500 12 11l4.500-7.500"/></svg>
<div style="position:absolute;left:651px;top:113.0px;line-height:40px;height:40px;font-size:28.6px;color:#3f9a78;font-weight:normal;white-space:nowrap;font-style:italic;">index.vue</div>
<svg style="position:absolute;left:786.5px;top:119.0px;stroke-linecap:butt;" width="27" height="27" viewBox="0 0 24 24" fill="none" stroke="#ffffff" stroke-width="3.5" stroke-linecap="round" stroke-linejoin="round"><path d="M6 6 18 18"/><path d="M18 6 6 18"/></svg>
<svg style="position:absolute;left:1868.5px;top:116.5px;" width="31" height="31" viewBox="0 0 24 24" fill="none" stroke="#d3d4da" stroke-width="1.8" stroke-linecap="round" stroke-linejoin="round"><path d="M3 12a9 9 0 1 0 9-9 9.750 9.750 0 0 0-6.740 2.740L3 8"/><path d="M3 3v5h5"/><path d="M12 7v5l4 2"/></svg>
<svg style="position:absolute;left:1924.0px;top:117.0px;" width="30" height="30" viewBox="0 0 24 24" fill="none" stroke="#d3d4da" stroke-width="1.8" stroke-linecap="round" stroke-linejoin="round"><path d="M2.500 4.500h19"/><path d="M7 9.500h14.500"/><path d="M7 14.500h11"/><path d="M7 19.500h11"/><path d="M7 4.500v15"/></svg>
<svg style="position:absolute;left:1980.0px;top:117.0px;" width="32" height="32" viewBox="0 0 24 24" fill="none" stroke="#d3d4da" stroke-width="1.8" stroke-linecap="round" stroke-linejoin="round"><circle cx="5" cy="5" r="2.600"/><circle cx="19" cy="19" r="2.600"/><path d="M5 7.600v7.400a4 4 0 0 0 4 4h3"/><path d="m9.500 16.500 2.500 2.500-2.500 2.500"/><path d="M19 16.400V9a4 4 0 0 0-4-4h-3"/><path d="M14.500 7.500 12 5l2.500-2.500"/></svg>
<svg style="position:absolute;left:2036.5px;top:116.5px;" width="31" height="31" viewBox="0 0 24 24" fill="none" stroke="#d3d4da" stroke-width="2" stroke-linecap="round" stroke-linejoin="round"><rect x="2.500" y="3" width="19" height="18" rx="1"/><path d="M12 3v18"/></svg>
<svg style="position:absolute;left:2093.0px;top:117.0px;color:#d3d4da;" width="30" height="30" viewBox="0 0 24 24" fill="none" stroke="#d3d4da" stroke-width="2" stroke-linecap="round" stroke-linejoin="round"><circle cx="4.500" cy="12" r="1.750" fill="currentColor" stroke="none"/><circle cx="12" cy="12" r="1.750" fill="currentColor" stroke="none"/><circle cx="19.500" cy="12" r="1.750" fill="currentColor" stroke="none"/></svg>
<div style="position:absolute;left:596px;top:182.5px;line-height:37px;height:37px;font-size:26.5px;color:#a2a4af;font-weight:normal;white-space:nowrap;">src</div>
<div style="position:absolute;left:641px;top:184.5px;line-height:33px;height:33px;font-size:24px;color:#383a43;font-weight:normal;white-space:nowrap;font-style:italic;">/</div>
<div style="position:absolute;left:671px;top:182.5px;line-height:37px;height:37px;font-size:26.5px;color:#a2a4af;font-weight:normal;white-space:nowrap;">pagesN</div>
<div style="position:absolute;left:772px;top:184.5px;line-height:33px;height:33px;font-size:24px;color:#383a43;font-weight:normal;white-space:nowrap;font-style:italic;">/</div>
<div style="position:absolute;left:801px;top:182.5px;line-height:37px;height:37px;font-size:26.5px;color:#a2a4af;font-weight:normal;white-space:nowrap;">ai</div>
<div style="position:absolute;left:831px;top:184.5px;line-height:33px;height:33px;font-size:24px;color:#383a43;font-weight:normal;white-space:nowrap;font-style:italic;">/</div>
<svg style="position:absolute;left:849.0px;top:189.0px;" width="26" height="26" viewBox="0 0 24 24" fill="none" stroke="#5ccba4" stroke-width="2.1" stroke-linecap="round" stroke-linejoin="round"><path d="M2 3.500h4.500L12 13l5.500-9.500H22L12 21Z" /><path d="M7.500 3.500 12 11l4.500-7.500"/></svg>
<div style="position:absolute;left:888px;top:182.5px;line-height:37px;height:37px;font-size:26.5px;color:#a2a4af;font-weight:normal;white-space:nowrap;">index.vue</div>
<div style="position:absolute;left:1010px;top:184.5px;line-height:33px;height:33px;font-size:24px;color:#383a43;font-weight:normal;white-space:nowrap;font-style:italic;">/</div>
<div style="position:absolute;left:1031px;top:186.0px;line-height:26px;height:26px;font-size:19px;color:#e6e7ec;font-weight:bold;white-space:nowrap;">{&hairsp;}</div>
<div style="position:absolute;left:1071px;top:182.5px;line-height:37px;height:37px;font-size:26.5px;color:#a2a4af;font-weight:normal;white-space:nowrap;">script</div>
<div style="position:absolute;left:570px;top:236px;width:1576px;height:2px;background:#23242a"></div>
<div style="position:absolute;left:570px;top:363px;width:1545px;height:1329px;overflow:hidden"><div style="position:absolute;left:-570px;top:-363px;width:2880px;height:1750px">
<div style="position:absolute;left:750px;top:1577px;width:1388px;height:63px;background:#1d3039"></div>
<div style="position:absolute;left:1435px;top:896px;width:91px;height:62px;background:#1d2a3a"></div>
<div style="position:absolute;left:751px;top:363px;width:1px;height:1330px;background:#2a2b32"></div>
<div style="position:absolute;left:795px;top:460.5px;width:1px;height:62.0px;background:#2a2b32"></div>
<div style="position:absolute;left:795px;top:646.5px;width:1px;height:1054.0px;background:#34353c"></div>
<div style="position:absolute;left:840px;top:770.5px;width:1px;height:186.0px;background:#2a2b32"></div>
<div style="position:absolute;left:840px;top:1142.5px;width:1px;height:248.0px;background:#2a2b32"></div>
<div style="position:absolute;left:840px;top:1576.5px;width:1px;height:124.0px;background:#2a2b32"></div>
<div class="ln" style="top:336.5px">173</div><div class="cl" style="top:336.5px"><span style="color:#e6e7ec">  </span><span style="color:#d971d6">}</span><span style="color:#e6e7ec">,</span></div>
<div class="ln" style="top:398.5px">174</div><div class="cl" style="top:398.5px"><span style="color:#e6e7ec">  </span><span style="color:#f2a27e">onPageScroll</span><span style="color:#d971d6">(</span><span style="color:#3fa2f7">{</span><span style="color:#e3dd8d"> scrollTop </span><span style="color:#3fa2f7">}</span><span style="color:#d971d6">)</span><span style="color:#e6e7ec"> </span><span style="color:#d971d6">{</span></div>
<div class="ln" style="top:460.5px">175</div><div class="cl" style="top:460.5px"><span style="color:#e6e7ec">    </span><span style="color:#e3dd8d">this</span><span style="color:#e6e7ec">.pageScrollTop = </span><span style="color:#e3dd8d">scrollTop</span></div>
<div class="ln" style="top:522.5px">176</div><div class="cl" style="top:522.5px"><span style="color:#e6e7ec">  </span><span style="color:#d971d6">}</span><span style="color:#e6e7ec">,</span></div>
<div class="ln" style="top:584.5px">177</div><div class="cl" style="top:584.5px"><span style="color:#e6e7ec">  methods: </span><span style="color:#d971d6">{</span></div>
<div class="ln" style="top:646.5px">178</div><div class="cl" style="top:646.5px"><span style="color:#e6e7ec">    </span><span style="color:#7f818a">/** <span class="cj">底部问题推荐</span> */</span></div>
<div class="ln" style="top:708.5px">179</div><div class="cl" style="top:708.5px"><span style="color:#e6e7ec">    </span><span style="color:#f2a27e">handleRecommendClick</span><span style="color:#3fa2f7">(</span><span style="color:#e3dd8d">word</span><span style="color:#3fa2f7">)</span><span style="color:#e6e7ec"> </span><span style="color:#3fa2f7">{</span></div>
<div class="ln" style="top:770.5px">180</div><div class="cl" style="top:770.5px"><span style="color:#e6e7ec">      </span><span style="color:#e3dd8d">this</span><span style="color:#e6e7ec">.</span><span style="color:#f2a27e">handleClear</span><span style="color:#f7c948">()</span></div>
<div class="ln" style="top:832.5px">181</div><div class="cl" style="top:832.5px"><span style="color:#e6e7ec">      </span><span style="color:#e3dd8d">this</span><span style="color:#e6e7ec">.</span><span style="color:#f2a27e">jumpToDialogue</span><span style="color:#f7c948">()</span></div>
<div class="ln" style="top:894.5px">182</div><div class="cl" style="top:894.5px"><span style="color:#e6e7ec">      </span><span style="color:#e3dd8d">this</span><span style="color:#e6e7ec">.showRecommendWord = </span><span style="color:#e3dd8d">word</span></div>
<div class="ln" style="top:956.5px">183</div><div class="cl" style="top:956.5px"><span style="color:#e6e7ec">    </span><span style="color:#3fa2f7">}</span><span style="color:#e6e7ec">,</span></div>
<div class="ln" style="top:1018.5px">184</div><div class="cl" style="top:1018.5px"><span style="color:#e6e7ec">    </span><span style="color:#7f818a">/** <span class="cj">语音输入松手事件</span> */</span></div>
<div class="ln" style="top:1080.5px">185</div><div class="cl" style="top:1080.5px"><span style="color:#e6e7ec">    </span><span style="color:#f2a27e">handleTouchMove</span><span style="color:#3fa2f7">(</span><span style="color:#e3dd8d">e</span><span style="color:#3fa2f7">)</span><span style="color:#e6e7ec"> </span><span style="color:#3fa2f7">{</span></div>
<div class="ln" style="top:1142.5px">186</div><div class="cl" style="top:1142.5px"><span style="color:#e6e7ec">      </span><span style="color:#ad92f8">const </span><span style="color:#7db6fb">moveY</span><span style="color:#e6e7ec"> = </span><span style="color:#e3dd8d">e</span><span style="color:#e6e7ec">.touches</span><span style="color:#f7c948">[</span><span style="color:#e78cbc">0</span><span style="color:#f7c948">]</span><span style="color:#e6e7ec">.clientY;</span></div>
<div class="ln" style="top:1204.5px">187</div><div class="cl" style="top:1204.5px"><span style="color:#e6e7ec">      </span><span style="color:#ad92f8">const </span><span style="color:#7db6fb">moveDistance</span><span style="color:#e6e7ec"> = </span><span style="color:#e3dd8d">this</span><span style="color:#e6e7ec">.touchStartY - </span><span style="color:#7db6fb">moveY</span><span style="color:#e6e7ec">;</span></div>
<div class="ln" style="top:1266.5px">188</div><div class="cl" style="top:1266.5px"><span style="color:#e6e7ec">      </span><span style="color:#7f818a">// <span class="cj">上滑超过</span>50px<span class="cj">时取消</span></span></div>
<div class="ln" style="top:1328.5px">189</div><div class="cl" style="top:1328.5px"><span style="color:#e6e7ec">      </span><span style="color:#e3dd8d">this</span><span style="color:#e6e7ec">.isCanceled = </span><span style="color:#7db6fb">moveDistance</span><span style="color:#e6e7ec"> &gt; </span><span style="color:#e78cbc">130</span><span style="color:#e6e7ec">;</span></div>
<div class="ln" style="top:1390.5px">190</div><div class="cl" style="top:1390.5px"><span style="color:#e6e7ec">    </span><span style="color:#3fa2f7">}</span><span style="color:#e6e7ec">,</span></div>
<div class="ln" style="top:1452.5px">191</div><div class="cl" style="top:1452.5px"><span style="color:#e6e7ec">    </span><span style="color:#7f818a">/** <span class="cj">开始录制</span> */</span></div>
<div class="ln" style="top:1514.5px">192</div><div class="cl" style="top:1514.5px"><span style="color:#e6e7ec">    </span><span style="color:#f2a27e">streamRecord</span><span style="color:#3fa2f7">(</span><span style="color:#e3dd8d">e</span><span style="color:#3fa2f7">)</span><span style="color:#e6e7ec"> </span><span style="color:#3fa2f7">{</span></div>
<div class="ln" style="top:1576.5px">193</div><div class="cl" style="top:1576.5px"><span style="color:#e6e7ec">      </span><span style="color:#7f818a">// </span><span style="color:#9faa35">#ifdef </span><span style="color:#54b56f">MP-WEIXIN</span></div>
<div class="ln" style="top:1638.5px">194</div><div class="cl" style="top:1638.5px"><span style="color:#e6e7ec">      </span><span style="color:#ad92f8">if </span><span style="color:#f7c948">(</span><span style="color:#e3dd8d">this</span><span style="color:#e6e7ec">.loading</span><span style="color:#f7c948">)</span><span style="color:#e6e7ec"> </span><span style="color:#f7c948">{</span></div>
<div class="cl" style="left:1394px;top:1576.5px;color:#55b9e4">"WEIXIN": Unknown word.</div>
<svg style="position:absolute;left:1170px;top:1632px;" width="134" height="9" viewBox="0 0 134 9" fill="none"><path d="M0 6 l5.6 -5 l5.6 5 l5.6 -5 l5.6 5 l5.6 -5 l5.6 5 l5.6 -5 l5.6 5 l5.6 -5 l5.6 5 l5.6 -5 l5.6 5 l5.6 -5 l5.6 5 l5.6 -5 l5.6 5 l5.6 -5 l5.6 5 l5.6 -5 l5.6 5 l5.6 -5 l5.6 5 l5.6 -5 l5.6 5 " stroke="#3d95f5" stroke-width="2.2" fill="none"/></svg>
</div></div>
<div class="ln" style="top:236.5px">62</div><div class="cl" style="top:236.5px"><span style="color:#e6e7ec">&lt;</span><span style="color:#ea8b8b">script</span><span style="color:#e6e7ec">&gt;</span></div>
<div class="ln" style="top:299.0px">77</div><div class="cl" style="top:299.0px"><span style="color:#ad92f8">export default </span><span style="color:#f7c948">{</span></div>
<div style="position:absolute;left:570px;top:361px;width:1545px;height:2px;background:#25262c"></div>
<div style="position:absolute;left:570px;top:363px;width:1545px;height:6px;background:linear-gradient(rgba(8,8,10,.55),rgba(8,8,10,0))"></div>
<div style="position:absolute;left:2114px;top:238px;width:1px;height:1454px;background:#26272d"></div>
<div style="position:absolute;left:2115px;top:276px;width:23px;height:62px;background:#1c2d38"></div>
<div style="position:absolute;left:2115px;top:1577px;width:23px;height:63px;background:#1d3039"></div>
<div style="position:absolute;left:2115px;top:290px;width:5px;height:27px;background:#3fb6e0;border-radius:1px"></div>
<div style="position:absolute;left:2120px;top:513px;width:14px;height:38px;border-radius:7px;background:#44464d"></div>
<div style="position:absolute;left:2131px;top:261px;width:7px;height:20px;background:#4a98f5"></div>
<div style="position:absolute;left:2131px;top:298px;width:7px;height:32px;background:#4a98f5"></div>
<div style="position:absolute;left:2131px;top:339px;width:7px;height:12px;background:#4a98f5"></div>
<div style="position:absolute;left:2131px;top:367px;width:7px;height:15px;background:#4a98f5"></div>
<div style="position:absolute;left:2131px;top:488px;width:7px;height:12px;background:#4a98f5"></div>
<div style="position:absolute;left:2131px;top:506px;width:7px;height:13px;background:#4a98f5"></div>
<div style="position:absolute;left:2131px;top:540px;width:7px;height:12px;background:#4a98f5"></div>
<div style="position:absolute;left:2131px;top:566px;width:7px;height:11px;background:#4a98f5"></div>
<div style="position:absolute;left:2131px;top:623px;width:7px;height:12px;background:#4a98f5"></div>
<div style="position:absolute;left:2131px;top:657px;width:7px;height:12px;background:#4a98f5"></div>
<div style="position:absolute;left:2131px;top:705px;width:7px;height:12px;background:#4a98f5"></div>
<div style="position:absolute;left:2131px;top:931px;width:7px;height:17px;background:#4a98f5"></div>
<div style="position:absolute;left:2131px;top:1007px;width:7px;height:12px;background:#4a98f5"></div>
<div style="position:absolute;left:2131px;top:1041px;width:7px;height:12px;background:#4a98f5"></div>
<div style="position:absolute;left:2131px;top:1182px;width:7px;height:12px;background:#4a98f5"></div>
<div style="position:absolute;left:2131px;top:1401px;width:7px;height:11px;background:#4a98f5"></div>
<div style="position:absolute;left:2131px;top:1415px;width:7px;height:22px;background:#4a98f5"></div>
<div style="position:absolute;left:2131px;top:1444px;width:7px;height:12px;background:#4a98f5"></div>
<div style="position:absolute;left:2131px;top:1526px;width:7px;height:17px;background:#4a98f5"></div>
<div style="position:absolute;left:2131px;top:1640px;width:7px;height:12px;background:#4a98f5"></div>
<div style="position:absolute;left:2115px;top:353px;width:23px;height:3px;background:#c8c9cf"></div>
<div style="position:absolute;left:750px;top:1681px;width:558px;height:9px;border-radius:5px;background:rgba(120,122,130,.55)"></div>
<div style="position:absolute;left:1436px;top:790px;width:534px;height:106px;box-sizing:border-box;border:2px solid #383a43;border-radius:12px;background:#191a1f"></div>
<div class="cl" style="left:1467px;top:812px"><span style="color:#d5d6dc">(</span><span style="color:#e3dd8d">parameter</span><span style="color:#d5d6dc">) </span><span style="color:#86d6a6">word</span><span style="color:#d5d6dc">: </span><span style="color:#e3dd8d">any</span></div>
<!-- trae -->
<div style="position:absolute;left:2194px;top:117.0px;line-height:36px;height:36px;font-size:26.4px;color:#ffffff;font-weight:bold;white-space:nowrap;">Trae</div>
<svg style="position:absolute;left:2625.5px;top:117.5px;" width="33" height="33" viewBox="0 0 24 24" fill="none" stroke="#d6d7dc" stroke-width="1.9" stroke-linecap="round" stroke-linejoin="round"><path d="M20.500 11.500A8.500 8.500 0 0 0 3.500 11.500v9h9"/><path d="M8 10.500h8"/><path d="M8 14.500h5"/><path d="M19 15.500v6"/><path d="M16 18.500h6"/></svg>
<svg style="position:absolute;left:2681.5px;top:117.5px;" width="33" height="33" viewBox="0 0 24 24" fill="none" stroke="#d6d7dc" stroke-width="1.9" stroke-linecap="round" stroke-linejoin="round"><path d="M3.200 13.500A9 9 0 1 0 5.500 6"/><path d="m1.500 11 1.700 2.500L5.800 12" /><path d="M12 7v5.500h4"/></svg>
<svg style="position:absolute;left:2738.0px;top:119.0px;" width="32" height="32" viewBox="0 0 24 24" fill="none" stroke="#d6d7dc" stroke-width="1.9" stroke-linecap="round" stroke-linejoin="round"><path d="M12.220 2h-.440a2 2 0 0 0-2 2v.180a2 2 0 0 1-1 1.730l-.430.250a2 2 0 0 1-2 0l-.150-.080a2 2 0 0 0-2.730.730l-.220.380a2 2 0 0 0 .730 2.730l.150.100a2 2 0 0 1 1 1.720v.510a2 2 0 0 1-1 1.740l-.150.090a2 2 0 0 0-.730 2.730l.220.380a2 2 0 0 0 2.730.730l.150-.080a2 2 0 0 1 2 0l.430.250a2 2 0 0 1 1 1.730V20a2 2 0 0 0 2 2h.440a2 2 0 0 0 2-2v-.180a2 2 0 0 1 1-1.730l.430-.250a2 2 0 0 1 2 0l.150.080a2 2 0 0 0 2.730-.730l.220-.390a2 2 0 0 0-.730-2.730l-.150-.080a2 2 0 0 1-1-1.740v-.500a2 2 0 0 1 1-1.740l.150-.090a2 2 0 0 0 .730-2.730l-.220-.380a2 2 0 0 0-2.730-.730l-.150.080a2 2 0 0 1-2 0l-.430-.250a2 2 0 0 1-1-1.730V4a2 2 0 0 0-2-2z"/><circle cx="12" cy="12" r="3"/></svg>
<svg style="position:absolute;left:2797.5px;top:121.5px;stroke-linecap:butt;" width="25" height="25" viewBox="0 0 24 24" fill="none" stroke="#ffffff" stroke-width="3.6" stroke-linecap="round" stroke-linejoin="round"><path d="M6 6 18 18"/><path d="M18 6 6 18"/></svg>
<div style="position:absolute;left:2370px;top:710.0px;line-height:66px;height:66px;font-size:46.5px;color:#8b8d99;font-weight:bold;white-space:nowrap;">与</div>
<div style="position:absolute;left:2435px;top:709.0px;line-height:66px;height:66px;font-size:44.5px;color:#ffffff;font-weight:bold;white-space:nowrap;">Trae</div>
<div style="position:absolute;left:2545px;top:710.0px;line-height:66px;height:66px;font-size:46.5px;color:#8b8d99;font-weight:bold;white-space:nowrap;">协作</div>
<div style="position:absolute;left:2196px;top:887px;width:624px;height:180px;border-radius:19px;background:linear-gradient(90deg,#ee6a66 0%,#ea7f9f 32%,#c99bec 55%,#dcd8f6 78%,#fbfbff 100%);opacity:.38"></div>
<div style="position:absolute;left:2201.5px;top:892.5px;width:613px;height:169px;border-radius:13.5px;background:linear-gradient(90deg,#ee6a66 0%,#ea7f9f 32%,#c99bec 55%,#dcd8f6 78%,#fbfbff 100%);opacity:.95"></div>
<div style="position:absolute;left:2204px;top:895px;width:608px;height:164px;border-radius:11px;background:#18191e"></div>
<div style="position:absolute;left:2224px;top:912px;width:2px;height:30px;background:#e8e8ee"></div>
<div class="ph" style="position:absolute;left:2226px;top:910.0px;line-height:36px;height:36px;font-size:25.8px;color:#6c6e7a;font-weight:normal;white-space:nowrap;">"<span style="display:inline-block;width:22px;text-align:center;font-family:'DejaVu Sans',sans-serif;font-size:24px;font-weight:200;transform:scale(1.45,1.2);">↑</span><span style="display:inline-block;width:22px;text-align:center;font-family:'DejaVu Sans',sans-serif;font-size:24px;font-weight:200;transform:scale(1.45,1.2);">↓</span>"<span style="margin-left:8px"></span>切换历史输入，<span style="margin-left:6px"></span>"<span style="display:inline-block;width:25.5px;text-align:center;font-family:'DejaVu Sans',sans-serif;font-size:24px;font-weight:200;transform:scale(1.75,1.2);">⇧</span><span style="display:inline-block;width:25.5px;text-align:center;font-family:'DejaVu Sans',sans-serif;font-size:24px;font-weight:200;transform:scale(1.45,1.25);">↵</span>"<span style="margin-left:12px"></span>换行</div>
<div style="position:absolute;left:2216px;top:1000px;width:120px;height:47px;box-sizing:border-box;border:2px solid #32343d;border-radius:10px;background:#1b1c22"></div>
<div style="position:absolute;left:2348px;top:1000px;width:120px;height:47px;box-sizing:border-box;border:2px solid #32343d;border-radius:10px;background:#1b1c22"></div>
<div style="position:absolute;left:2505px;top:1000px;width:231px;height:47px;box-sizing:border-box;border:2px solid #32343d;border-radius:10px;background:#1b1c22"></div>
<div style="position:absolute;left:2226px;top:1004.5px;line-height:37px;height:37px;font-size:27px;color:#e6e7ec;font-weight:bold;white-space:nowrap;-webkit-text-stroke:0.6px #e6e7ec;">@</div>
<div style="position:absolute;left:2254px;top:1007.5px;line-height:33px;height:33px;font-size:24px;color:#8d8f9b;font-weight:normal;white-space:nowrap;">智能体</div>
<div style="position:absolute;left:2358px;top:1001.5px;line-height:43px;height:43px;font-size:31px;color:#e6e7ec;font-weight:bold;white-space:nowrap;transform:scaleX(1.22);transform-origin:left center;">#</div>
<div style="position:absolute;left:2386px;top:1007.5px;line-height:33px;height:33px;font-size:24px;color:#8d8f9b;font-weight:normal;white-space:nowrap;">上下文</div>
<svg style="position:absolute;left:2522px;top:1009px;" width="28" height="28" viewBox="0 0 28 28" fill="none"><circle cx="15" cy="15" r="11" fill="#e9eaee"/><path d="M6 3c5 1 8 6 7 12s-4 10-8 10c-3-3-4-8-3-13S4 4 6 3Z" fill="#9a9ca6"/><path d="M10 9c3 2 4 6 3 10s-3 6-6 6" fill="#1b1c22"/></svg>
<div style="position:absolute;left:2556px;top:1008.0px;line-height:32px;height:32px;font-size:23.5px;color:#a6a8b3;font-weight:normal;white-space:nowrap;">Doubao-1.5-pro</div>
<div style="position:absolute;left:2724px;top:987px;width:24px;height:24px;border-radius:50%;background:rgba(233,80,80,.28)"></div>
<div style="position:absolute;left:2730px;top:993px;width:12px;height:12px;border-radius:50%;background:#e8544f"></div>
<svg style="position:absolute;left:2756.0px;top:1004.0px;color:#5b6471;" width="40" height="40" viewBox="0 0 24 24" fill="none" stroke="#5b6471" stroke-width="0.1" stroke-linecap="round" stroke-linejoin="round"><path d="M21.500 2.500 2.500 10l8 3.500 3.500 8Z" fill="currentColor"/></svg>
<div style="position:absolute;left:2527px;top:1678.5px;line-height:34px;height:34px;font-size:24.6px;color:#ecedf1;font-weight:normal;white-space:nowrap;text-shadow:0 1px 3px rgba(0,0,0,.8);z-index:5;-webkit-text-stroke:0.3px #ecedf1;">掘金技术社区 @ 一诺滚雪球</div>
<!-- status -->
<svg style="position:absolute;left:45.5px;top:1712.5px;" width="27" height="27" viewBox="0 0 24 24" fill="none" stroke="#9698a4" stroke-width="2" stroke-linecap="round" stroke-linejoin="round"><circle cx="6" cy="4.500" r="2.300"/><circle cx="6" cy="19.500" r="2.300"/><circle cx="18" cy="6.500" r="2.300"/><path d="M6 6.800v10.400"/><path d="M18 8.800c0 4-5 3.500-12 5.500"/></svg>
<div style="position:absolute;left:81px;top:1708.0px;line-height:36px;height:36px;font-size:26.2px;color:#9698a4;font-weight:normal;white-space:nowrap;-webkit-text-stroke:0.3px #9698a4;">feature/fyl/zhonglv_0605*</div>
<svg style="position:absolute;left:388.5px;top:1712.5px;" width="27" height="27" viewBox="0 0 24 24" fill="none" stroke="#9698a4" stroke-width="2" stroke-linecap="round" stroke-linejoin="round"><path d="M3 12a9 9 0 0 1 15.500-6.200L21 8"/><path d="M21 3v5h-5"/><path d="M21 12a9 9 0 0 1-15.500 6.200L3 16"/><path d="M3 21v-5h5"/></svg>
<svg style="position:absolute;left:443.0px;top:1712.0px;" width="28" height="28" viewBox="0 0 24 24" fill="none" stroke="#9698a4" stroke-width="1.8" stroke-linecap="round" stroke-linejoin="round"><circle cx="7" cy="4" r="2.200"/><circle cx="7" cy="20" r="2.200"/><circle cx="18" cy="14" r="2.200"/><path d="M7 6.200v11.600"/><path d="M12.500 2v20"/><path d="M12.500 8c3 0 5.500 1.500 5.500 3.800"/></svg>
<svg style="position:absolute;left:504.5px;top:1712.5px;" width="27" height="27" viewBox="0 0 24 24" fill="none" stroke="#9698a4" stroke-width="1.8" stroke-linecap="round" stroke-linejoin="round"><path d="M4.500 16.500c-1.500 1.260-2 5-2 5s3.740-.500 5-2c.710-.840.700-2.130-.090-2.910a2.180 2.180 0 0 0-2.910-.090z"/><path d="m12 15-3-3a22 22 0 0 1 2-3.950A12.880 12.880 0 0 1 22 2c0 2.720-.780 7.500-6 11a22.350 22.350 0 0 1-4 2z"/><path d="M9 12H4s.550-3.030 2-4c1.620-1.080 5 0 5 0"/><path d="M12 15v5s3.030-.550 4-2c1.080-1.620 0-5 0-5"/></svg>
<svg style="position:absolute;left:535.0px;top:1711.0px;" width="24" height="24" viewBox="0 0 24 24" fill="none" stroke="#9698a4" stroke-width="1.8" stroke-linecap="round" stroke-linejoin="round"><path d="m19 5 3-3"/><path d="m2 22 3-3"/><path d="M6.300 20.300a2.400 2.400 0 0 0 3.400 0L12 18l-6-6-2.300 2.300a2.400 2.400 0 0 0 0 3.400Z"/><path d="M7.500 13.500 10 11"/><path d="M10.500 16.500 13 14"/><path d="m12 6 6 6 2.300-2.300a2.400 2.400 0 0 0 0-3.400l-2.600-2.600a2.400 2.400 0 0 0-3.400 0Z"/></svg>
<div style="position:absolute;left:567px;top:1708.0px;line-height:36px;height:36px;font-size:25.8px;color:#9698a4;font-weight:normal;white-space:nowrap;-webkit-text-stroke:0.3px #9698a4;">Launchpad</div>
<div style="position:absolute;left:726px;top:1714px;width:24px;height:24px;border-radius:50%;background:#9698a4;color:#2d2f38;font-size:14px;font-weight:bold;line-height:24px;text-align:center">✕</div>
<div style="position:absolute;left:759px;top:1708.0px;line-height:36px;height:36px;font-size:26px;color:#9698a4;font-weight:normal;white-space:nowrap;-webkit-text-stroke:0.3px #9698a4;">0</div>
<div style="position:absolute;left:783px;top:1714px;width:24px;height:24px;border-radius:50%;background:#9698a4;color:#2d2f38;font-size:19px;font-weight:bold;line-height:24px;text-align:center">!</div>
<div style="position:absolute;left:816px;top:1708.0px;line-height:36px;height:36px;font-size:26px;color:#9698a4;font-weight:normal;white-space:nowrap;-webkit-text-stroke:0.3px #9698a4;">0</div>
<div style="position:absolute;left:840px;top:1714px;width:24px;height:24px;border-radius:50%;background:#9698a4;color:#2d2f38;font-size:19px;font-weight:bold;line-height:24px;text-align:center">i</div>
<div style="position:absolute;left:872px;top:1708.0px;line-height:36px;height:36px;font-size:26px;color:#9698a4;font-weight:normal;white-space:nowrap;-webkit-text-stroke:0.3px #9698a4;">40</div>
<div style="position:absolute;left:935px;top:1709.0px;line-height:34px;height:34px;font-size:24.9px;color:#9698a4;font-weight:normal;white-space:nowrap;-webkit-text-stroke:0.3px #9698a4;">Git Graph</div>
<svg style="position:absolute;left:1074.5px;top:1711.5px;stroke-linejoin:miter;" width="27" height="27" viewBox="0 0 24 24" fill="none" stroke="#9698a4" stroke-width="1.7" stroke-linecap="round" stroke-linejoin="round"><path d="M2.500 4.500h7.500l1.500 2.500h10v13.500h-19Z"/><path d="M2.500 9.500h19"/></svg>
<div style="position:absolute;left:1110px;top:1708.0px;line-height:36px;height:36px;font-size:26.2px;color:#9698a4;font-weight:normal;white-space:nowrap;-webkit-text-stroke:0.3px #9698a4;">dsminipro</div>
<div style="position:absolute;left:1894px;top:1708.5px;line-height:35px;height:35px;font-size:25.5px;color:#9698a4;font-weight:normal;white-space:nowrap;letter-spacing:-0.2px;-webkit-text-stroke:0.3px #9698a4;">行 73，列 26</div>
<div style="position:absolute;left:2072px;top:1708.5px;line-height:35px;height:35px;font-size:25.5px;color:#9698a4;font-weight:normal;white-space:nowrap;-webkit-text-stroke:0.3px #9698a4;">空格: 2</div>
<div style="position:absolute;left:2182px;top:1708.0px;line-height:36px;height:36px;font-size:26px;color:#9698a4;font-weight:normal;white-space:nowrap;-webkit-text-stroke:0.3px #9698a4;">UTF-8</div>
<div style="position:absolute;left:2286px;top:1708.0px;line-height:36px;height:36px;font-size:26px;color:#9698a4;font-weight:normal;white-space:nowrap;-webkit-text-stroke:0.3px #9698a4;">LF</div>
<svg style="position:absolute;left:2340.5px;top:1711.5px;" width="27" height="27" viewBox="0 0 24 24" fill="none" stroke="#9698a4" stroke-width="1.8" stroke-linecap="round" stroke-linejoin="round"><path d="M8 3H7a2 2 0 0 0-2 2v5a2 2 0 0 1-2 2 2 2 0 0 1 2 2v5c0 1.100.900 2 2 2h1"/><path d="M16 21h1a2 2 0 0 0 2-2v-5c0-1.100.900-2 2-2a2 2 0 0 1-2-2V5a2 2 0 0 0-2-2h-1"/></svg>
<div style="position:absolute;left:2359px;top:1728px;width:13px;height:13px;border-radius:50%;background:#9698a4;box-shadow:0 0 0 2px #33363f;color:#2d2f38;font-size:9px;font-weight:bold;line-height:13px;text-align:center">✕</div>
<div style="position:absolute;left:2382px;top:1708.0px;line-height:36px;height:36px;font-size:26.2px;color:#9698a4;font-weight:normal;white-space:nowrap;-webkit-text-stroke:0.3px #9698a4;">vue</div>
<svg style="position:absolute;left:2451.5px;top:1713.5px;color:#9698a4;" width="25" height="25" viewBox="0 0 24 24" fill="none" stroke="#9698a4" stroke-width="1.8" stroke-linecap="round" stroke-linejoin="round"><circle cx="12" cy="10" r="2.200" fill="currentColor"/><path d="M12 12.500V22" stroke-width="3"/><path d="M7.800 14.500a6 6 0 1 1 8.400 0"/><path d="M5 17.500a10 10 0 1 1 14 0"/></svg>
<div style="position:absolute;left:2486px;top:1709.0px;line-height:34px;height:34px;font-size:24.5px;color:#9698a4;font-weight:normal;white-space:nowrap;-webkit-text-stroke:0.3px #9698a4;">Go Live</div>
<div style="position:absolute;left:2585px;top:1702px;width:201px;height:48px;background:#7d6a1f"></div>
<div style="position:absolute;left:2607px;top:1708.5px;line-height:35px;height:35px;font-size:25.3px;color:#ffffff;font-weight:normal;white-space:nowrap;-webkit-text-stroke:0.3px #fff;">1 known issue</div>
<svg style="position:absolute;left:2802.5px;top:1712.5px;" width="27" height="27" viewBox="0 0 24 24" fill="none" stroke="#9698a4" stroke-width="1.8" stroke-linecap="round" stroke-linejoin="round"><path d="M8.700 3A6 6 0 0 1 18 8c0 2.700.600 4.600 1.400 6"/><path d="M17 17H3s3-2 3-9c0-.400 0-.700.100-1"/><path d="M10.300 21a1.940 1.940 0 0 0 3.400 0"/><path d="m2 2 20 20"/></svg>
</div>
<script>(function(){var w=window.innerWidth;if(w&&Math.abs(w-2880)>2){var k=w/2880,e=document.getElementById('win');e.style.transformOrigin='0 0';e.style.transform='scale('+k+')';}})();</script>
</body></html>
